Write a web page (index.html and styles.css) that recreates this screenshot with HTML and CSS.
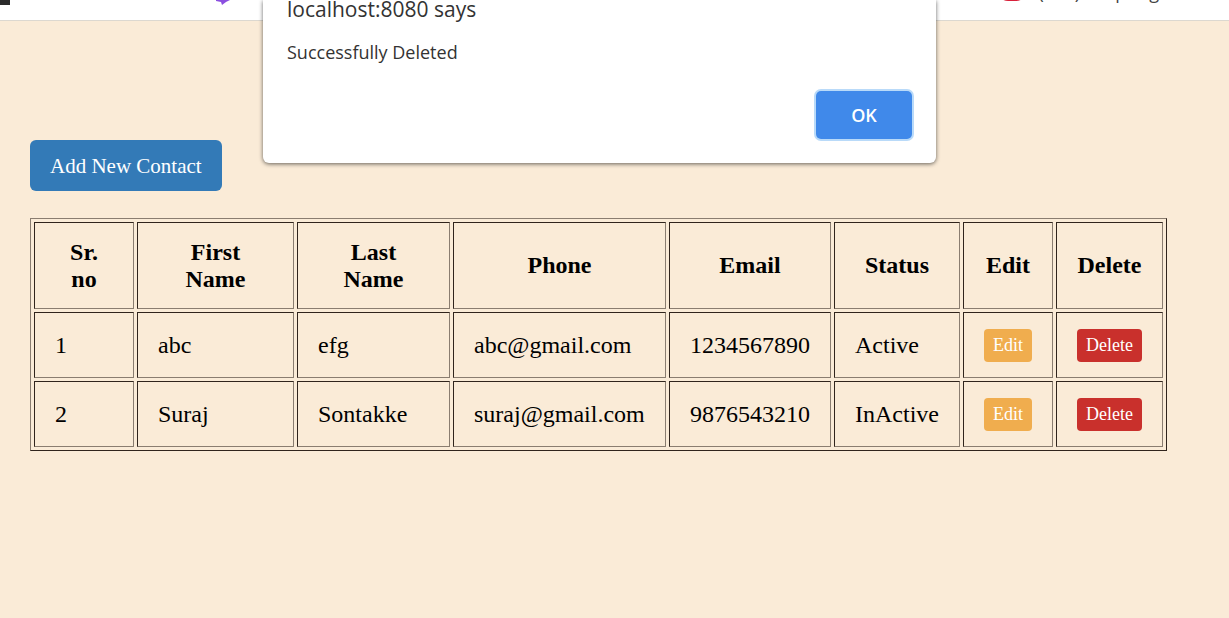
FILE: index.html
```html
<!DOCTYPE html>
<html lang="en">
<head>
<meta charset="utf-8">
<title>Contacts</title>
<link rel="stylesheet" href="styles.css">
</head>
<body>
<header class="bookmarks">
  <svg class="bookmark-icons" viewBox="0 0 260 20" aria-hidden="true">
    <rect width="10" height="5" fill="#2b2b2b"/>
    <path d="M216 0H230L226 2L222 5L221 2L216 1Z" fill="#8b4fe0"/>
  </svg>
  <a class="bookmark" href="#">
    <svg class="play" viewBox="0 0 28 20" aria-hidden="true"><rect width="28" height="19" rx="10" fill="#d8203a"/></svg>
    <span>(314) In Spring</span>
  </a>
</header>
<main class="page">
  <button class="button add" type="button">Add New Contact</button>
  <table class="contacts">
    <colgroup>
      <col class="col-no"><col class="col-first"><col class="col-last"><col class="col-phone">
      <col class="col-email"><col class="col-status"><col class="col-edit"><col class="col-delete">
    </colgroup>
    <thead>
      <tr><th>Sr. no</th><th>First Name</th><th>Last Name</th><th>Phone</th><th>Email</th><th>Status</th><th>Edit</th><th>Delete</th></tr>
    </thead>
    <tbody>
      <tr>
        <td>1</td><td>abc</td><td>efg</td><td>abc@gmail.com</td><td>1234567890</td><td>Active</td>
        <td><button class="button small edit" type="button">Edit</button></td>
        <td><button class="button small delete" type="button">Delete</button></td>
      </tr>
      <tr>
        <td>2</td><td>Suraj</td><td>Sontakke</td><td>suraj@gmail.com</td><td>9876543210</td><td>InActive</td>
        <td><button class="button small edit" type="button">Edit</button></td>
        <td><button class="button small delete" type="button">Delete</button></td>
      </tr>
    </tbody>
  </table>
</main>
<div class="dialog" role="alertdialog" aria-labelledby="dialog-title" aria-describedby="dialog-message">
  <h1 class="dialog-title" id="dialog-title">localhost:8080 says</h1>
  <p class="dialog-message" id="dialog-message">Successfully Deleted</p>
  <button class="dialog-ok" type="button">OK</button>
</div>
</body>
</html>
```
FILE: styles.css
```css
* { box-sizing: border-box; }
body {
  margin: 0;
  background: #faebd7;
  color: #000;
  font-family: "Liberation Serif", serif;
}
.bookmarks {
  display: flex;
  justify-content: space-between;
  height: 21px;
  overflow: hidden;
  background: #fff;
  border-bottom: 1px solid #dcd8d0;
}
.bookmark-icons { width: 260px; height: 20px; }
.bookmark {
  display: flex;
  align-items: center;
  gap: 12px;
  margin: -18px 70px 0 0;
  height: 20px;
  color: #444;
  font: 18px/20px "Open Sans", sans-serif;
  text-decoration: none;
}
.play { width: 28px; height: 20px; }
.page { padding: 119px 62px 40px 30px; }
.button {
  border: 0;
  border-radius: 4px;
  color: #fff;
  font-family: inherit;
}
.add {
  display: block;
  padding: 14px 20px 13px;
  border-radius: 6px;
  background: #337ab7;
  font-size: 21px;
  line-height: 24px;
}
.contacts {
  width: 100%;
  margin-top: 27px;
  table-layout: fixed;
  border: 1px solid;
  border-color: #8a7d70 #30241c #30241c #8a7d70;
  border-spacing: 3px;
  font-size: 24px;
  line-height: 27px;
}
.contacts th, .contacts td {
  border: 1px solid;
  border-color: #30241c #8a7d70 #8a7d70 #30241c;
}
.contacts th { height: 87px; padding: 15px 20px; }
.contacts th:nth-child(n+7) { padding: 15px 0; }
.contacts td { height: 66px; padding: 15px 20px; }
.col-no { width: 100px; }
.col-first { width: 157px; }
.col-last { width: 153px; }
.col-phone { width: 213px; }
.col-email { width: 162px; }
.col-status { width: 126px; }
.col-edit { width: 90px; }
.col-delete { width: 107px; }
.small {
  display: block;
  padding: 6px 9px;
  font-size: 18px;
  line-height: 21px;
}
.edit { background: #f0ad4e; }
.delete { background: #c9302c; }
.dialog {
  position: absolute;
  top: 0;
  left: 263px;
  display: flex;
  flex-direction: column;
  width: 673px;
  padding: 0 24px 24px;
  border-radius: 0 0 6px 6px;
  background: #fff;
  box-shadow: 0 1px 4px rgba(0, 0, 0, 0.6);
  color: #333;
  font-family: "Open Sans", sans-serif;
}
.dialog-title { margin: -5px 0 0; font-size: 21px; font-weight: 400; line-height: 28px; }
.dialog-message { margin: 17px 0 27px; font-size: 18px; line-height: 24px; }
.dialog-ok {
  align-self: flex-end;
  width: 96px;
  height: 48px;
  border: 0;
  border-radius: 5px;
  background: #4089ea;
  box-shadow: 0 0 0 2px #b9daf9;
  color: #fff;
  font: 600 18px/24px "Open Sans", sans-serif;
}
```
